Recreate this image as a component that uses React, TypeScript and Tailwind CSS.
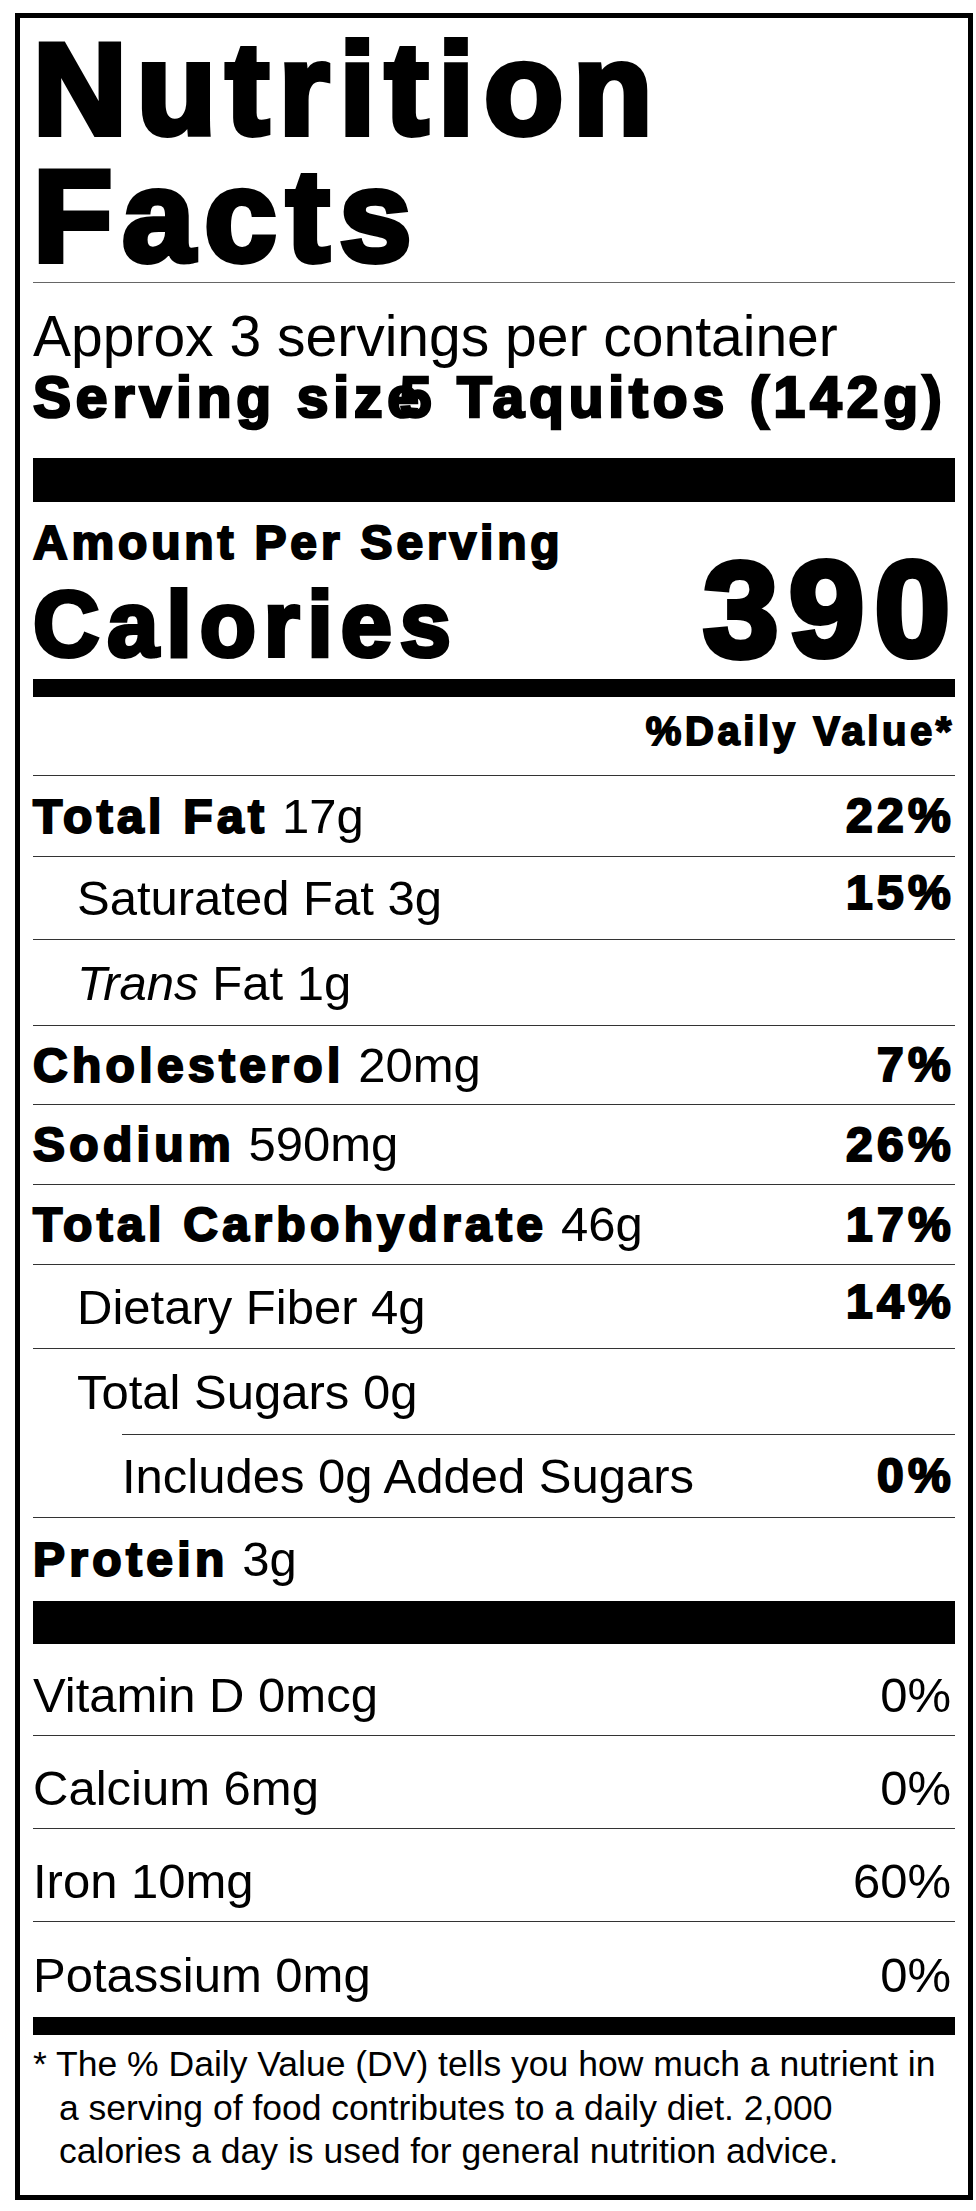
const heavy = "font-bold [-webkit-text-stroke:0.045em_black]";

type Row = {
  label: string;
  amount: string;
  pct?: string;
  bold?: boolean;
  italic?: boolean;
  indent?: number;
  h: string;
  raise?: boolean;
  line?: boolean;
};

const rows: Row[] = [
  { label: "Total Fat", amount: "17g", pct: "22%", bold: true, h: "h-[81px]", line: true },
  { label: "Saturated Fat", amount: "3g", pct: "15%", indent: 1, h: "h-[83px]", raise: true, line: true },
  { label: "Trans", amount: "Fat 1g", italic: true, indent: 1, h: "h-[86px]", line: true },
  { label: "Cholesterol", amount: "20mg", pct: "7%", bold: true, h: "h-[79px]", line: true },
  { label: "Sodium", amount: "590mg", pct: "26%", bold: true, h: "h-[80px]", line: true },
  { label: "Total Carbohydrate", amount: "46g", pct: "17%", bold: true, h: "h-[80px]", line: true },
  { label: "Dietary Fiber", amount: "4g", pct: "14%", indent: 1, h: "h-[84px]", raise: true, line: true },
  { label: "Total Sugars", amount: "0g", indent: 1, h: "h-[85px]" },
  { label: "Includes 0g Added Sugars", amount: "", pct: "0%", indent: 2, h: "h-[84px]", line: true },
  { label: "Protein", amount: "3g", bold: true, h: "h-[83px]" },
];

const vitamins = [
  { label: "Vitamin D 0mcg", pct: "0%", h: "h-[92px]", line: true },
  { label: "Calcium 6mg", pct: "0%", h: "h-[93px]", line: true },
  { label: "Iron 10mg", pct: "60%", h: "h-[93px]", line: true },
  { label: "Potassium 0mg", pct: "0%", h: "h-[95px]", line: false },
];

function NutrientRow({ row }: { row: Row }) {
  const content = (
    <div className={`flex items-center justify-between text-[49px] leading-[48px] ${row.indent === 1 ? "pl-[44px]" : ""}`}>
      <span>
        {row.bold ? (
          <span className={`text-[48px] tracking-[0.09em] ${heavy}`}>{row.label}</span>
        ) : row.italic ? (
          <i>{row.label}</i>
        ) : (
          <span>{row.label}</span>
        )}
        {row.amount && <span> {row.amount}</span>}
      </span>
      {row.pct && (
        <span className={`text-[48px] tracking-[0.09em] ${heavy} ${row.raise ? "mb-[10px]" : ""}`}>{row.pct}</span>
      )}
    </div>
  );

  if (row.indent === 2) {
    return (
      <div className={`${row.h} border-b border-[#333]`}>
        <div className="ml-[89px] flex h-full flex-col justify-center border-t border-[#333]">{content}</div>
      </div>
    );
  }

  return (
    <div className={`${row.h} flex flex-col justify-center ${row.line ? "border-b border-[#333]" : ""}`}>
      {content}
    </div>
  );
}

export default function App() {
  return (
    <div className="min-h-screen bg-white pl-[15px] pt-[13px] font-['Liberation_Sans',Arial,sans-serif] text-black">
      <div className="w-[958px] border-[5px] border-black px-[13px] pb-[21px] pt-[8px]">
        <h1 className={`text-[130px] leading-[127px] tracking-[0.075em] ${heavy}`}>
          Nutrition
          <br />
          Facts
        </h1>
        <div className="mt-[2px] h-px bg-[#666]" />

        <div className="mt-[23px] text-[57px] leading-[61px]">Approx 3 servings per container</div>
        <div className={`text-[57px] leading-[61px] tracking-[0.085em] ${heavy}`}>
          Serving size<span className="ml-[-24px]">5 Taquitos (142g)</span>
        </div>

        <div className="mt-[30px] h-[44px] bg-black" />

        <div className="mt-[16px] flex items-end justify-between">
          <div className="flex flex-col">
            <div className={`text-[48px] leading-[50px] tracking-[0.08em] ${heavy}`}>Amount Per Serving</div>
            <div className={`mt-[11px] text-[92px] leading-[90px] tracking-[0.085em] ${heavy}`}>Calories</div>
          </div>
          <div className={`mr-[-0.04em] text-[136px] leading-[120px] tracking-[0.075em] ${heavy}`}>390</div>
        </div>

        <div className="mt-[10px] h-[18px] bg-black" />

        <div className="flex h-[79px] justify-end border-b border-[#333] pt-[15px]">
          <span className={`text-[40px] leading-[38px] tracking-[0.09em] ${heavy}`}>%Daily Value*</span>
        </div>

        {rows.map((row) => (
          <NutrientRow key={row.label} row={row} />
        ))}

        <div className="h-[43px] bg-black" />

        {vitamins.map((v) => (
          <div
            key={v.label}
            className={`${v.h} flex items-center justify-between pt-[12px] text-[49px] leading-[49px] ${v.line ? "border-b border-[#333]" : ""}`}
          >
            <span>{v.label}</span>
            <span className="pr-[4px]">{v.pct}</span>
          </div>
        ))}

        <div className="h-[18px] bg-black" />

        <p className="mt-[8px] pl-[26px] indent-[-26px] text-[35.5px] leading-[43.5px]">
          * The % Daily Value (DV) tells you how much a nutrient in
          <br />
          a serving of food contributes to a daily diet. 2,000
          <br />
          calories a day is used for general nutrition advice.
        </p>
      </div>
    </div>
  );
}
